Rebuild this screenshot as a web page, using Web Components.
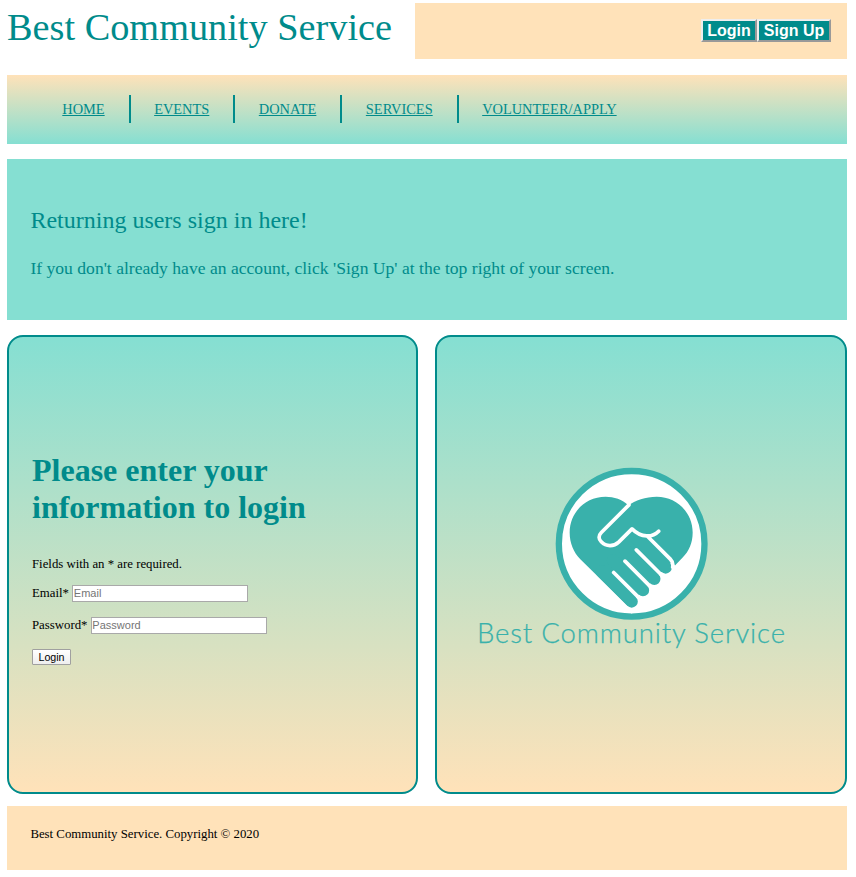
<!DOCTYPE html>
<html lang="en">
<head>
<meta charset="utf-8">
<title>Best Community Service</title>
<style>
html{background:#fff}
body{margin:0;padding:3px 9px 0 7px;font-family:"Liberation Serif",serif;font-size:12.8px;color:#000;
--teal:#008b8b;--aqua:#85dfd2;--peach:#ffe2b9}
</style>
</head>
<body>
<bcs-page></bcs-page>
<script>
const define=(name,html)=>customElements.define(name,class extends HTMLElement{
  constructor(){super();this.attachShadow({mode:'open'}).innerHTML=html;}
});

define('bcs-header',`<style>
:host{display:flex;height:56px;margin-bottom:16px}
.title{width:408px;font-size:38.3px;line-height:49px;color:var(--teal);white-space:nowrap}
.actions{flex:1;background:var(--peach);display:flex;justify-content:flex-end;align-items:flex-start;padding:16px 16px 0 0}
button{box-sizing:border-box;height:23px;border:2px solid;border-color:#eee #999 #999 #eee;background:var(--teal);color:#fff;font:bold 16px/19px "Liberation Sans",sans-serif;padding:0;margin:0}
.a{width:56px}.b{width:74px}
</style><div class="title">Best Community Service</div><div class="actions"><button class="a">Login</button><button class="b">Sign Up</button></div>`);

define('bcs-nav',`<style>
:host{display:flex;box-sizing:border-box;height:69px;margin-bottom:15px;padding:20px 0 0 31.7px;background:linear-gradient(var(--peach),var(--aqua))}
::slotted(a){box-sizing:border-box;height:28px;padding:0 23.900px 0 23.6px;border-right:2px solid var(--teal);color:var(--teal);font-size:14.4px;line-height:28px;text-decoration:underline}
::slotted(a:last-child){border:0}
</style><slot></slot>`);

define('bcs-banner',`<style>
:host{display:block;box-sizing:border-box;height:161px;margin-bottom:15px;padding:47px 23px 0 23.4px;background:var(--aqua);color:var(--teal)}
.h{font-size:24px;line-height:28px}.p{font-size:17.6px;line-height:20px;margin-top:24px}
</style><div class="h"><slot name="title"></slot></div><div class="p"><slot></slot></div>`);

define('bcs-card',`<style>
:host{display:block;box-sizing:border-box;height:459px;border:2px solid var(--teal);border-radius:16px;background:linear-gradient(var(--aqua),var(--peach))}
</style><slot></slot>`);

define('bcs-login',`<style>
:host{display:block;padding:115px 23px 0}
h1{margin:0 0 31px;width:300px;font-size:32px;line-height:37px;color:var(--teal)}
.row{display:flex;align-items:center;height:17px;margin-bottom:15px;line-height:15px}
.note{height:15px;line-height:15px;margin-bottom:13px}
input{box-sizing:border-box;width:176px;height:17px;border:1px solid #a9a9a9;margin:0 0 0 3.4px;padding:0 1px 1px 0.5px;background:#fff;font:11px "Liberation Sans",sans-serif}
input::placeholder{color:#757575}
button{display:block;box-sizing:border-box;width:39px;height:16px;border:1px solid #a0a0a0;border-radius:1px;padding:0;background:linear-gradient(#fff,#eee);color:#000;font:10.67px/13px "Liberation Sans",sans-serif}
</style><h1>Please enter your information to login</h1>
<div class="note">Fields with an * are required.</div>
<div class="row"><label>Email*</label><input placeholder="Email"></div>
<div class="row"><label>Password*</label><input type="password" placeholder="Password"></div>
<button>Login</button>`);

define('bcs-logo',`<style>
:host{display:flex;justify-content:center;padding:123px 13px 0 0}
svg{display:block}
</style><svg width="330" height="195" viewBox="0 0 330 195">
<g transform="translate(75 .5) scale(.33333)">
<circle cx="260" cy="250" r="218.500" fill="#fff" stroke="#39b1ab" stroke-width="19"/>
<path fill="#39b1ab" d="M250 135C232 117 207 109 182 109C120 109 74 157 74 216C74 248 86 276 106 296L248 436L376 309L390 315L413 291C432 272 443 247 443 216C443 157 396 109 335 109C302 109 270 121 250 135Z"/>
<path fill="#fff" d="M248 436L260 460L400 330L388 314L376 309Z"/>
<path fill="none" stroke="#39b1ab" stroke-width="37" stroke-linecap="round" d="M170 333L260 423M204 299L294 389M238 265L328 355M272 231L362 321"/>
<path fill="none" stroke="#fff" stroke-width="11" stroke-linecap="round" stroke-linejoin="round" d="M252 133L169 216C160 225 160 236 169 244C184 260 207 258 221 245L261 205C289 233 323 231 341 212M308 228L376 296Q386 306 383 320M206 336L280 410M240 302L314 376M274 268L348 342"/>
</g>
<text x="7" y="182.500" textLength="308" lengthAdjust="spacing" font-family="Lato,sans-serif" font-weight="300" font-size="27.500" fill="#39b1ab" stroke="#39b1ab" stroke-width=".25">Best Community Service</text>
</svg>`);

define('bcs-footer',`<style>
:host{display:block;box-sizing:border-box;height:64px;margin-top:12px;padding:21px 23px 0 23.4px;background:var(--peach);line-height:15px}
</style><slot></slot>`);

define('bcs-page',`<style>
:host{display:block}
.cards{display:grid;grid-template-columns:411px 412px;gap:17px}
</style>
<bcs-header></bcs-header>
<bcs-nav><a>HOME</a><a>EVENTS</a><a>DONATE</a><a>SERVICES</a><a>VOLUNTEER/APPLY</a></bcs-nav>
<bcs-banner><span slot="title">Returning users sign in here!</span>If you don't already have an account, click 'Sign Up' at the top right of your screen.</bcs-banner>
<div class="cards"><bcs-card><bcs-login></bcs-login></bcs-card><bcs-card><bcs-logo></bcs-logo></bcs-card></div>
<bcs-footer>Best Community Service. Copyright © 2020</bcs-footer>`);
</script>
</body>
</html>
